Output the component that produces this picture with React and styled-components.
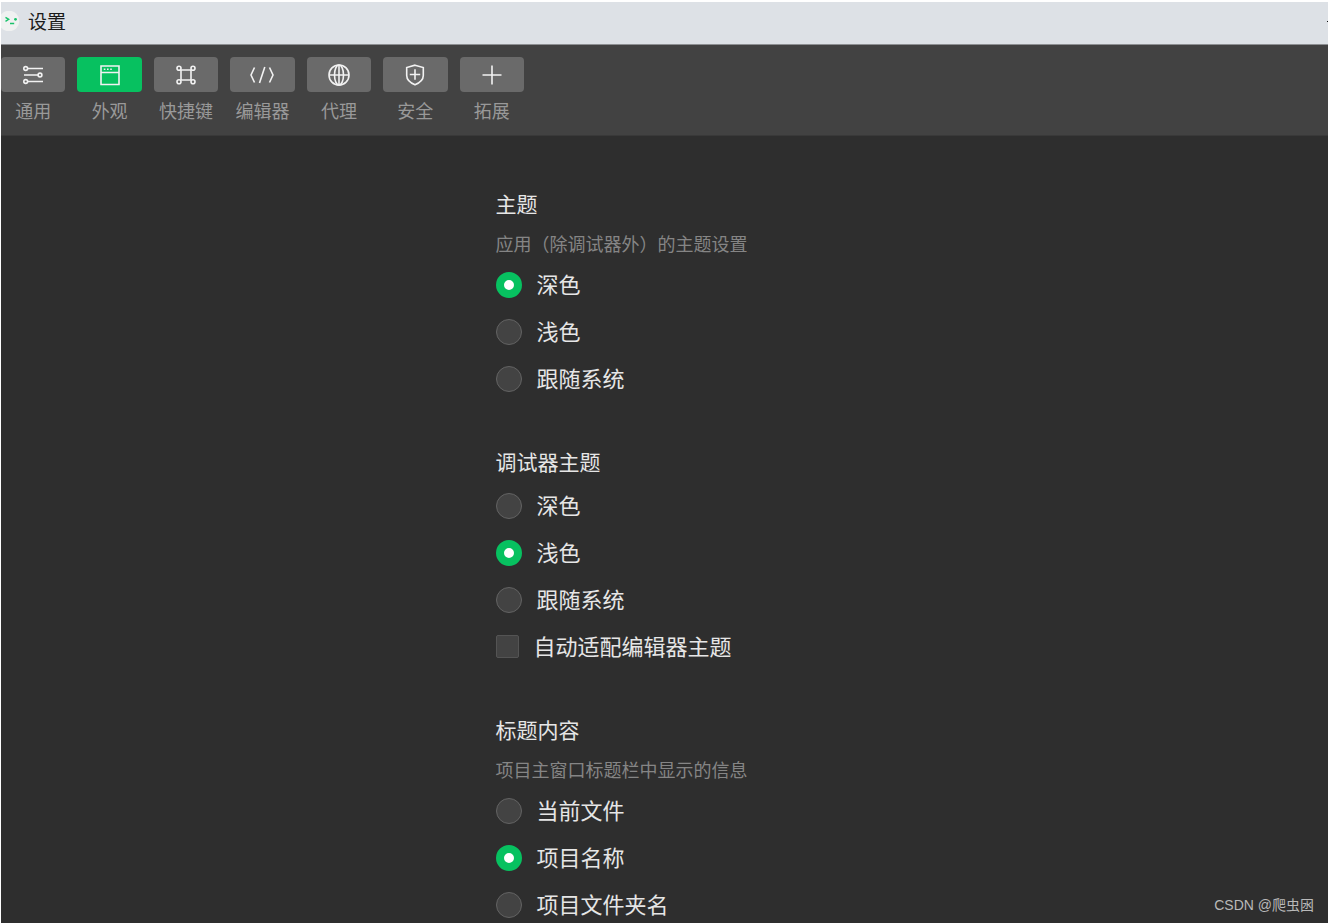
import React, { useState } from "react";
import styled, { createGlobalStyle } from "styled-components";

const GlobalStyle = createGlobalStyle`
  * {
    box-sizing: border-box;
  }
  body {
    margin: 0;
    background: #fff;
    font-family: "Liberation Sans", "Noto Sans CJK SC", sans-serif;
  }
`;

const Window = styled.div`
  position: relative;
  display: flex;
  flex-direction: column;
  min-height: 100vh;
  padding: 2px 1px 0;
`;

const TitleBar = styled.header`
  display: flex;
  align-items: center;
  justify-content: space-between;
  height: 43px;
  background: #dde1e6;
  border-bottom: 1px solid #8d8f92;
  overflow: hidden;
`;

const TitleGroup = styled.div`
  display: flex;
  align-items: center;
  gap: 8px;
  height: 40px;
  svg {
    display: block;
    margin-bottom: 4px;
  }
`;

const Title = styled.h1`
  margin: 0;
  font-size: 19px;
  font-weight: 400;
  line-height: 28px;
  color: #1b1b1b;
`;

const Minimize = styled.span`
  width: 1px;
  height: 1px;
  margin-bottom: 4px;
  background: #111;
`;

const Toolbar = styled.nav`
  padding: 12px 0 10px;
  background: #424242;
  border-bottom: 1px solid #393939;
`;

const Tabs = styled.div`
  display: grid;
  grid-template-columns: repeat(7, 1fr);
  gap: 12px;
  width: 523px;
  max-width: 100%;
`;

const Tab = styled.button`
  display: flex;
  flex-direction: column;
  gap: 7px;
  padding: 0;
  border: 0;
  background: none;
  font-family: inherit;
  font-size: 18px;
  line-height: 26px;
  color: #999;
  white-space: nowrap;
  text-align: center;
  cursor: pointer;
`;

const TabIcon = styled.span`
  display: flex;
  align-items: center;
  justify-content: center;
  width: 100%;
  height: 35px;
  border-radius: 4px;
  background: ${({ $active }) => ($active ? "#07c160" : "#6a6a6a")};
  color: #f2f2f2;
`;

const TabLabel = styled.span`
  width: 100%;
`;

const Content = styled.main`
  flex: 1;
  padding: 54px 0 5px;
  background: #2e2e2e;
`;

const Form = styled.form`
  display: flex;
  flex-direction: column;
  gap: 56px;
  max-width: 338px;
  margin: 0 auto;
`;

const Section = styled.fieldset`
  min-width: 0;
  margin: 0;
  padding: 0;
  border: 0;
`;

const Heading = styled.legend`
  padding: 0;
  font-size: 21px;
  line-height: 30px;
  color: #e6e6e6;
`;

const Desc = styled.p`
  margin: 12px 0 -1px;
  font-size: 18px;
  line-height: 26px;
  color: #858585;
  white-space: nowrap;
`;

const Options = styled.div`
  display: flex;
  flex-direction: column;
  gap: 20px;
  margin-top: 14px;
`;

const Option = styled.label`
  display: flex;
  align-items: center;
  gap: 15px;
  height: 27px;
  font-size: 22px;
  line-height: 27px;
  color: #e6e6e6;
  cursor: pointer;
`;

const OptionText = styled.span`
  padding-top: 2px;
  white-space: nowrap;
`;

const Radio = styled.input`
  appearance: none;
  flex: none;
  width: 26px;
  height: 26px;
  margin: 0;
  border: 1px solid #636363;
  border-radius: 50%;
  background: #434343;
  &:checked {
    border: 8px solid #07c160;
    background: #fff;
  }
`;

const Checkbox = styled.input`
  appearance: none;
  flex: none;
  width: 23px;
  height: 23px;
  margin: 0;
  border: 1px solid #545454;
  border-radius: 2px;
  background: #434343;
  &:checked {
    border-color: #07c160;
    background: #07c160;
  }
`;

const Watermark = styled.span`
  position: absolute;
  right: 15px;
  bottom: 7px;
  font-size: 14px;
  line-height: 22px;
  color: #b9b9b9;
`;

const Logo = () => (
  <svg width="19" height="20" viewBox="0 0 19 20" fill="none">
    <circle cx="8" cy="10" r="10.3" fill="#f0f1f1" />
    <path d="M4.5 6.3l3.2 2-3.200 2M9 12.500h4.200" stroke="#19c26b" strokeWidth="1.4" />
    <circle cx="14.5" cy="8.300" r="1.400" fill="#19c26b" />
  </svg>
);

const Icon = ({ children }) => (
  <svg
    width="26"
    height="24"
    viewBox="0 0 26 24"
    fill="none"
    stroke="currentColor"
    strokeWidth="1.6"
  >
    {children}
  </svg>
);

const tabs = [
  {
    key: "general",
    label: "通用",
    icon: (
      <>
        <circle cx="5.7" cy="5.5" r="1.9" />
        <path d="M7.6 5.5H23M4 12h14.1M7.6 18.5H23" />
        <circle cx="20" cy="12" r="1.9" />
        <circle cx="5.7" cy="18.5" r="1.9" />
      </>
    ),
  },
  {
    key: "appearance",
    label: "外观",
    icon: (
      <>
        <path d="M4 3h18v18.500H4zM4 9.500h18" />
        <path d="M6.800 6.300h1.600M10 6.300h1.600M13.200 6.300h1.600" />
      </>
    ),
  },
  {
    key: "shortcut",
    label: "快捷键",
    icon: (
      <>
        <path d="M8 7h10v10H8z" />
        <circle cx="6" cy="5.200" r="2" />
        <circle cx="20" cy="5.200" r="2" />
        <circle cx="6" cy="18.800" r="2" />
        <circle cx="20" cy="18.800" r="2" />
      </>
    ),
  },
  {
    key: "editor",
    label: "编辑器",
    icon: (
      <path d="M5.500 4.500L2 12l3.500 7.500M20.500 4.500L24 12l-3.500 7.500M15.800 4l-5.300 16" />
    ),
  },
  {
    key: "proxy",
    label: "代理",
    icon: (
      <>
        <circle cx="13" cy="12" r="10" />
        <ellipse cx="13" cy="12" rx="4.500" ry="10" />
        <path d="M3 12h20M13 2v20" />
      </>
    ),
  },
  {
    key: "security",
    label: "安全",
    icon: (
      <>
        <path d="M13 2.200l8.300 2.300v8c0 4.500-4 7.500-8.300 9.300-4.300-1.800-8.300-4.800-8.300-9.300v-8z" />
        <path d="M13 6.300v10.400M7.800 11.500h10.400" />
      </>
    ),
  },
  {
    key: "extend",
    label: "拓展",
    icon: <path d="M13 2.500v19M3.500 12h19" />,
  },
];

const sections = [
  {
    name: "theme",
    title: "主题",
    desc: "应用（除调试器外）的主题设置",
    options: ["深色", "浅色", "跟随系统"],
  },
  {
    name: "debuggerTheme",
    title: "调试器主题",
    options: ["深色", "浅色", "跟随系统"],
    check: "自动适配编辑器主题",
  },
  {
    name: "titleContent",
    title: "标题内容",
    desc: "项目主窗口标题栏中显示的信息",
    options: ["当前文件", "项目名称", "项目文件夹名"],
  },
];

export default function App() {
  const [activeTab, setActiveTab] = useState("appearance");
  const [values, setValues] = useState({
    theme: "深色",
    debuggerTheme: "浅色",
    titleContent: "项目名称",
  });
  const [autoAdapt, setAutoAdapt] = useState(false);

  return (
    <>
      <GlobalStyle />
      <Window>
        <TitleBar>
          <TitleGroup>
            <Logo />
            <Title>设置</Title>
          </TitleGroup>
          <Minimize />
        </TitleBar>
        <Toolbar>
          <Tabs>
            {tabs.map((tab) => (
              <Tab
                key={tab.key}
                type="button"
                onClick={() => setActiveTab(tab.key)}
              >
                <TabIcon $active={tab.key === activeTab}>
                  <Icon>{tab.icon}</Icon>
                </TabIcon>
                <TabLabel>{tab.label}</TabLabel>
              </Tab>
            ))}
          </Tabs>
        </Toolbar>
        <Content>
          <Form>
            {sections.map((section) => (
              <Section key={section.name}>
                <Heading>{section.title}</Heading>
                {section.desc && <Desc>{section.desc}</Desc>}
                <Options>
                  {section.options.map((el) => (
                    <Option key={el}>
                      <Radio
                        type="radio"
                        name={section.name}
                        checked={values[section.name] === el}
                        onChange={() =>
                          setValues({ ...values, [section.name]: el })
                        }
                      />
                      <OptionText>{el}</OptionText>
                    </Option>
                  ))}
                  {section.check && (
                    <Option>
                      <Checkbox
                        type="checkbox"
                        checked={autoAdapt}
                        onChange={(e) => setAutoAdapt(e.target.checked)}
                      />
                      <OptionText>{section.check}</OptionText>
                    </Option>
                  )}
                </Options>
              </Section>
            ))}
          </Form>
        </Content>
        <Watermark>CSDN @爬虫囦</Watermark>
      </Window>
    </>
  );
}
